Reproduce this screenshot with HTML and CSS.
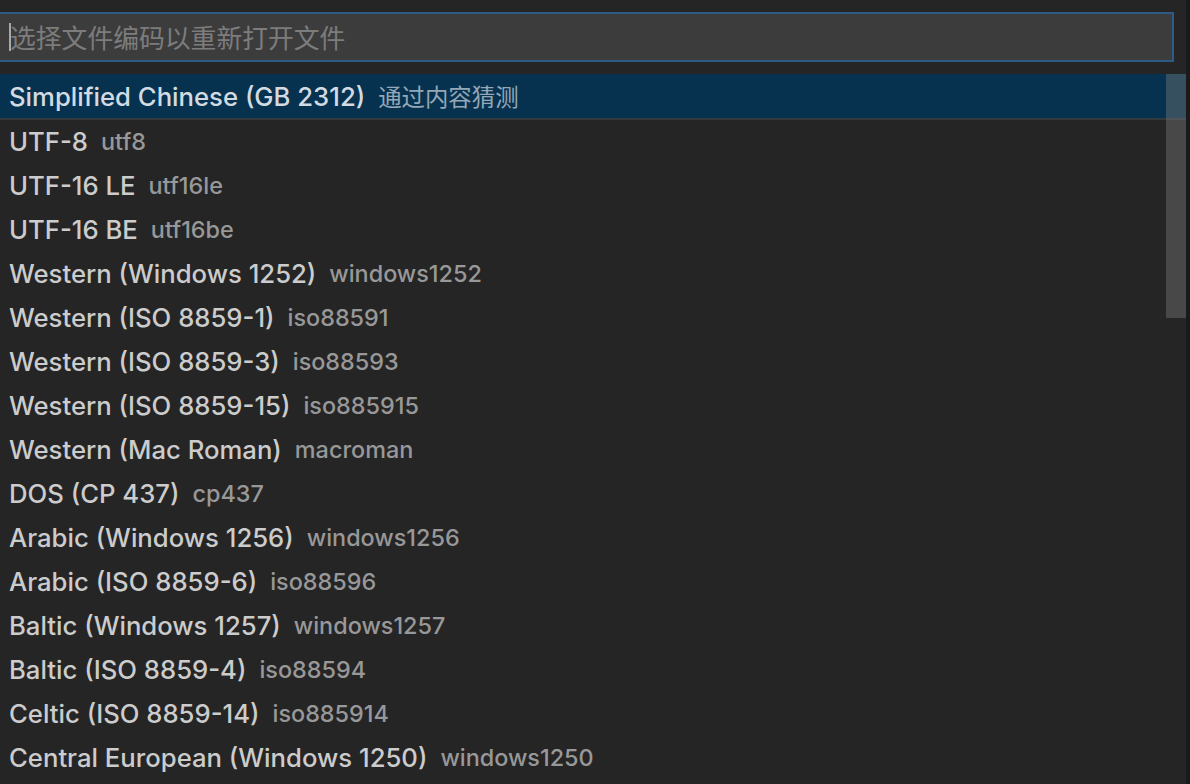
FILE: index.html
```html
<!DOCTYPE html>
<html lang="zh-CN">
<head>
<meta charset="utf-8">
<title>选择文件编码以重新打开文件</title>
<link rel="stylesheet" href="styles.css">
</head>
<body>
<div class="screen">
  <div class="quick-open">
    <div class="input-wrap">
      <div class="input">
        <span class="caret"></span><span class="placeholder">选择文件编码以重新打开文件</span>
      </div>
    </div>
    <div class="list">
      <div class="row selected"><span class="label">Simplified Chinese (GB 2312)</span><span class="desc">通过内容猜测</span></div>
      <div class="row"><span class="label">UTF-8</span><span class="desc">utf8</span></div>
      <div class="row"><span class="label">UTF-16 LE</span><span class="desc">utf16le</span></div>
      <div class="row"><span class="label">UTF-16 BE</span><span class="desc">utf16be</span></div>
      <div class="row"><span class="label">Western (Windows 1252)</span><span class="desc">windows1252</span></div>
      <div class="row"><span class="label">Western (ISO 8859-1)</span><span class="desc">iso88591</span></div>
      <div class="row"><span class="label">Western (ISO 8859-3)</span><span class="desc">iso88593</span></div>
      <div class="row"><span class="label">Western (ISO 8859-15)</span><span class="desc">iso885915</span></div>
      <div class="row"><span class="label">Western (Mac Roman)</span><span class="desc">macroman</span></div>
      <div class="row"><span class="label">DOS (CP 437)</span><span class="desc">cp437</span></div>
      <div class="row"><span class="label">Arabic (Windows 1256)</span><span class="desc">windows1256</span></div>
      <div class="row"><span class="label">Arabic (ISO 8859-6)</span><span class="desc">iso88596</span></div>
      <div class="row"><span class="label">Baltic (Windows 1257)</span><span class="desc">windows1257</span></div>
      <div class="row"><span class="label">Baltic (ISO 8859-4)</span><span class="desc">iso88594</span></div>
      <div class="row"><span class="label">Celtic (ISO 8859-14)</span><span class="desc">iso885914</span></div>
      <div class="row"><span class="label">Central European (Windows 1250)</span><span class="desc">windows1250</span></div>
      <div class="scroll-thumb"></div>
    </div>
  </div>
  <div class="edge"></div>
</div>
</body>
</html>
```
FILE: styles.css
```css
html, body {
  margin: 0;
  padding: 0;
  background: #252526;
  overflow: hidden;
}

.screen {
  display: flex;
  width: 1190px;
  height: 784px;
  overflow: hidden;
  font-family: "Inter", "Noto Sans CJK SC", sans-serif;
}

.quick-open {
  flex: 1;
  display: flex;
  flex-direction: column;
  padding-top: 12px;
  gap: 12px;
  min-width: 0;
}

.input-wrap {
  padding-right: 12px;
  margin-left: -2px;
}

.input {
  height: 46px;
  background: #3c3c3c;
  border: 2px solid #2d5b86;
  display: flex;
  align-items: center;
  padding-left: 9px;
}

.caret {
  width: 2px;
  height: 28px;
  background: #a9a9a9;
  margin-right: -1px;
}

.placeholder {
  font-family: "Noto Sans CJK SC", sans-serif;
  font-size: 25.8px;
  color: #7c7c7c;
  line-height: 1;
}

.list {
  position: relative;
  flex: 1;
  overflow: hidden;
}

.row {
  height: 44px;
  display: flex;
  align-items: center;
  padding-left: 9px;
  white-space: nowrap;
  box-sizing: border-box;
}

.row.selected {
  background: #07324f;
  border-bottom: 2px solid #34393e;
  height: 46px;
  margin-bottom: -1px;
  padding-bottom: 0;
}

.label {
  font-size: 25.7px;
  font-weight: 500;
  color: #cccccc;
}

.desc {
  font-size: 23.4px;
  font-weight: 500;
  color: #989898;
  margin-left: 13px;
}

.selected .label {
  color: #d3dbe2;
}

.selected .desc {
  color: #93a7b7;
  font-weight: 400;
}

.scroll-thumb {
  position: absolute;
  top: 0;
  right: 0;
  width: 20px;
  height: 244px;
  background: rgba(121, 121, 121, 0.42);
}

.edge {
  width: 4px;
  background: #1a1a1b;
}
```
